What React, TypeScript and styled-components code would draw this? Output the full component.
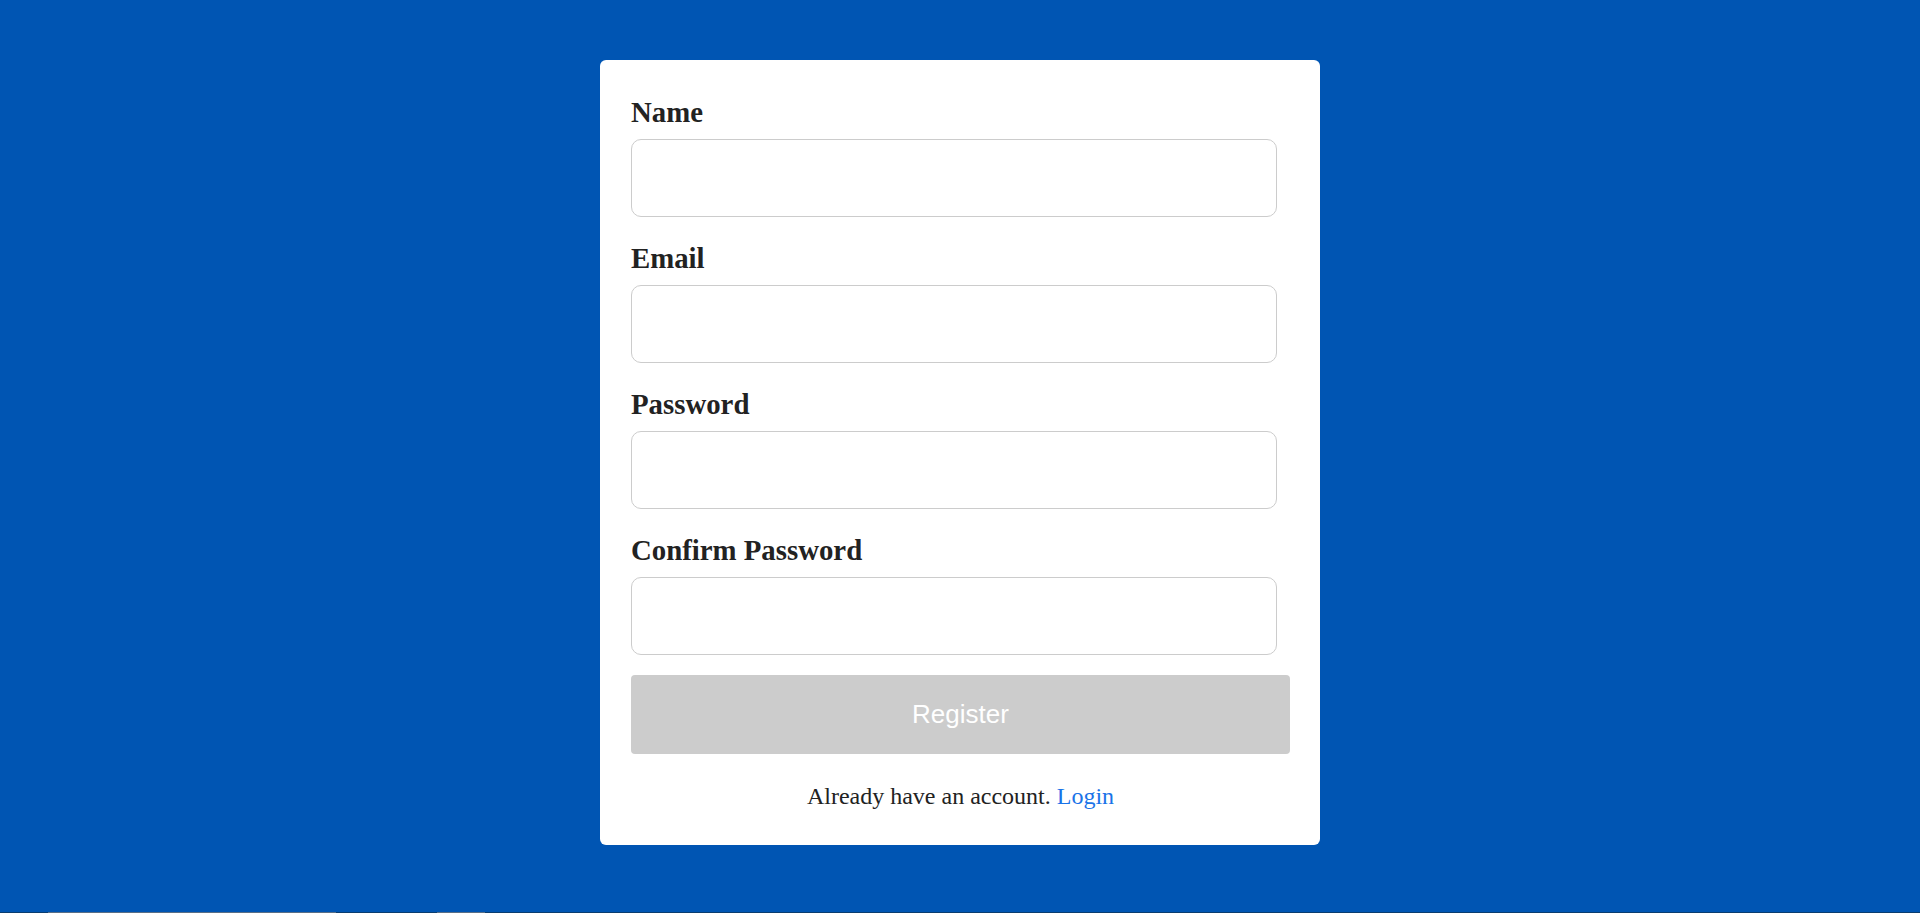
import React from "react";
import styled, { createGlobalStyle } from "styled-components";

const GlobalStyle = createGlobalStyle`
  html, body {
    margin: 0;
    padding: 0;
    background: #0055b3;
  }
  * { box-sizing: border-box; }
`;

const Page = styled.div`
  min-height: 913px;
  display: flex;
  flex-direction: column;
  background: #0055b3;
`;

const Stage = styled.main`
  height: 912px;
  display: flex;
  justify-content: center;
  align-items: flex-start;
  padding-top: 60px;
`;

const Card = styled.div`
  width: 720px;
  background: #ffffff;
  border-radius: 6px;
  padding: 36px 30px 35px 31px;
  font-family: "Liberation Serif", "Times New Roman", serif;
  color: #222222;
`;

const Form = styled.form`
  display: flex;
  flex-direction: column;
`;

const Field = styled.div<{ $last?: boolean }>`
  display: flex;
  flex-direction: column;
  margin-bottom: ${(p) => (p.$last ? "20px" : "25px")};
`;

const Label = styled.label`
  font-size: 28.8px;
  line-height: 32px;
  font-weight: 700;
  color: #222222;
  margin-bottom: 11px;
`;

const Input = styled.input`
  width: 646px;
  height: 78px;
  border: 1px solid #cccccc;
  border-radius: 10px;
  padding: 0 16px;
  font-size: 22px;
  font-family: "Liberation Sans", Arial, sans-serif;
  outline: none;
  background: #ffffff;
`;

const Button = styled.button`
  width: 659px;
  height: 79px;
  border: none;
  border-radius: 4px;
  background: #cccccc;
  color: #ffffff;
  font-family: "Liberation Sans", Arial, sans-serif;
  font-size: 26px;
  cursor: not-allowed;
`;

const Footer = styled.p`
  margin: 29px 0 0;
  text-align: center;
  font-size: 24px;
  line-height: 27px;
  color: #222222;
`;

const LoginLink = styled.a`
  color: #1a73e8;
  text-decoration: none;
`;

const Strip = styled.div`
  height: 1px;
  display: flex;
  background: #0b3d6e;
`;

const StripSeg = styled.div<{ $w: number; $grey?: boolean }>`
  width: ${(p) => p.$w}px;
  flex: ${(p) => (p.$w === 0 ? "1" : "none")};
  background: ${(p) => (p.$grey ? "#5a6f86" : "#0b3d6e")};
`;

const fields = ["Name", "Email", "Password", "Confirm Password"];

export default function App() {
  return (
    <Page>
      <GlobalStyle />
      <Stage>
        <Card>
          <Form onSubmit={(e) => e.preventDefault()}>
            {fields.map((f, i) => (
              <Field key={f} $last={i === fields.length - 1}>
                <Label>{f}</Label>
                <Input type={f.includes("Password") ? "password" : f === "Email" ? "email" : "text"} />
              </Field>
            ))}
            <Button type="submit" disabled>
              Register
            </Button>
          </Form>
          <Footer>
            Already have an account. <LoginLink href="#">Login</LoginLink>
          </Footer>
        </Card>
      </Stage>
      <Strip>
        <StripSeg $w={48} />
        <StripSeg $w={288} $grey />
        <StripSeg $w={101} />
        <StripSeg $w={48} $grey />
        <StripSeg $w={0} />
      </Strip>
    </Page>
  );
}
